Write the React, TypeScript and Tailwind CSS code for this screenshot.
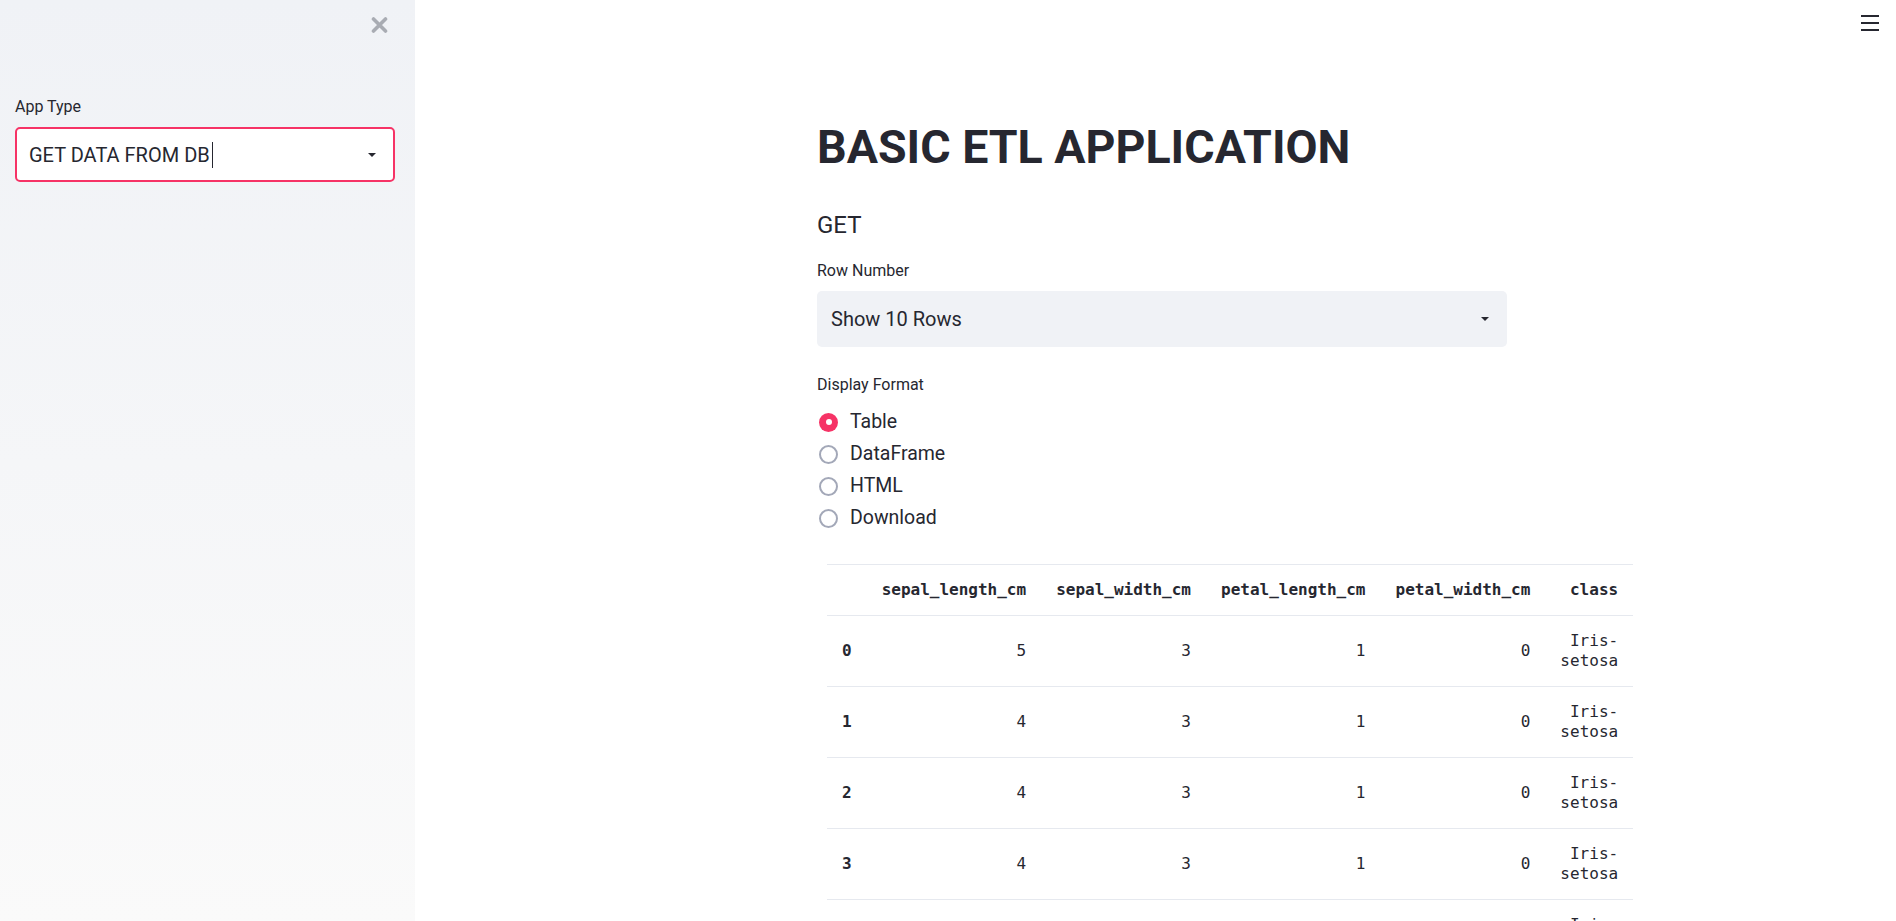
import { useState } from "react";

const rows = [
  [5, 3, 1, 0],
  [4, 3, 1, 0],
  [4, 3, 1, 0],
  [4, 3, 1, 0],
  [5, 3, 1, 0],
  [5, 3, 1, 0],
  [4, 3, 1, 0],
  [5, 3, 1, 0],
  [4, 2, 1, 0],
  [4, 3, 1, 0],
];

const columns = ["sepal_length_cm", "sepal_width_cm", "petal_length_cm", "petal_width_cm", "class"];
const formats = ["Table", "DataFrame", "HTML", "Download"];

function Caret() {
  return (
    <svg width="8" height="4" viewBox="0 0 8 4" className="shrink-0">
      <path d="M0 0 L8 0 L4 4 Z" fill="#262730" />
    </svg>
  );
}

function Sidebar() {
  return (
    <aside className="flex h-full w-[415px] shrink-0 flex-col bg-gradient-to-b from-[#f0f2f6] to-[#fafafa]">
      <div className="flex justify-end pr-[27px] pt-[17px]">
        <svg width="17" height="16" viewBox="0 0 17 16">
          <path d="M2.5 2 L14.5 14 M14.5 2 L2.5 14" stroke="#a9acb3" strokeWidth="3.6" strokeLinecap="round" />
        </svg>
      </div>
      <div className="mt-[64px] pl-[15px] pr-[20px]">
        <label className="block text-[16px] leading-[20px] text-[#262730]">App Type</label>
        <div className="mt-[10px] flex h-[55px] items-center rounded-[5px] border-2 border-[#f63366] bg-white pl-[12px] pr-[17px]">
          <span className="text-[20px] leading-[24px] text-[#262730]">GET DATA FROM DB</span>
          <span className="ml-[2px] h-[26px] w-px bg-[#262730]" />
          <span className="flex-1" />
          <Caret />
        </div>
      </div>
    </aside>
  );
}

function Radio({ label, checked }: { label: string; checked: boolean }) {
  return (
    <div className="flex h-[32px] items-center gap-[12px]">
      {checked ? (
        <span className="flex h-[19px] w-[19px] items-center justify-center rounded-full bg-[#f63366]">
          <span className="h-[6px] w-[6px] rounded-full bg-white" />
        </span>
      ) : (
        <span className="h-[19px] w-[19px] rounded-full border-2 border-[#a3a8b8] bg-white" />
      )}
      <span className="text-[19.5px] leading-[24px] text-[#262730]">{label}</span>
    </div>
  );
}

function DataTable() {
  return (
    <table className="ml-[10px] w-max border-collapse font-['DejaVu_Sans_Mono',monospace] text-[16px] leading-[20px] text-[#262730]">
      <thead>
        <tr className="border-y border-[#e6e9ef]">
          <th className="px-[15px] py-[15px]" />
          {columns.map((c) => (
            <th key={c} className="px-[15px] py-[15px] text-right font-bold">
              {c}
            </th>
          ))}
        </tr>
      </thead>
      <tbody>
        {rows.map((r, i) => (
          <tr key={i} className="border-b border-[#e6e9ef]">
            <th className="px-[15px] py-[15px] text-left align-middle font-bold">{i}</th>
            {r.map((v, j) => (
              <td key={j} className="px-[15px] py-[15px] text-right align-middle">
                {v}
              </td>
            ))}
            <td className="px-[15px] py-[15px] text-right align-middle">
              Iris-
              <br />
              setosa
            </td>
          </tr>
        ))}
      </tbody>
    </table>
  );
}

export default function App() {
  const [format] = useState("Table");
  return (
    <div className="flex h-screen w-full overflow-hidden bg-white font-['Roboto',sans-serif] text-[#262730]">
      <Sidebar />
      <main className="relative flex flex-1 justify-center pl-[13px]">
        <div className="absolute right-[17px] top-[15px] flex flex-col gap-[5px]">
          <span className="h-[2px] w-[18px] bg-[#262730]" />
          <span className="h-[2px] w-[18px] bg-[#262730]" />
          <span className="h-[2px] w-[18px] bg-[#262730]" />
        </div>
        <div className="w-[690px] pt-[120px]">
          <h1 className="text-[46.5px] font-bold leading-[55px] text-[#262730]">BASIC ETL APPLICATION</h1>
          <h2 className="mt-[36px] text-[24px] leading-[29px] text-[#262730]">GET</h2>
          <label className="mt-[21px] block text-[16px] leading-[20px]">Row Number</label>
          <div className="mt-[10px] flex h-[56px] items-center rounded-[5px] bg-[#f0f2f6] pl-[14px] pr-[18px]">
            <span className="flex-1 text-[20px] leading-[24px]">Show 10 Rows</span>
            <Caret />
          </div>
          <label className="mt-[28px] block text-[16px] leading-[20px]">Display Format</label>
          <div className="mt-[11px] flex flex-col pl-[2px]">
            {formats.map((f) => (
              <Radio key={f} label={f} checked={f === format} />
            ))}
          </div>
          <div className="mt-[30px]">
            <DataTable />
          </div>
        </div>
      </main>
    </div>
  );
}
